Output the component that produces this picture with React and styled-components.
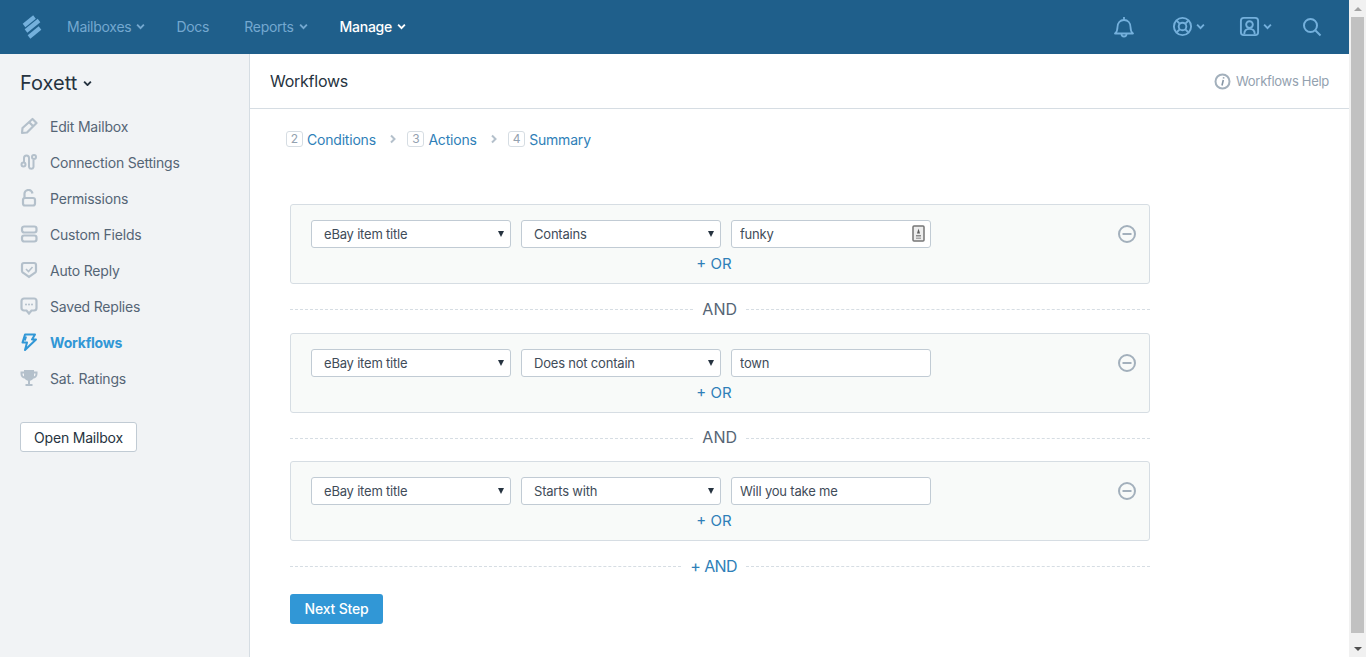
import React from 'react'
import styled, { createGlobalStyle } from 'styled-components'

const GlobalStyle = createGlobalStyle`
  html, body {
    margin: 0;
    padding: 0;
    height: 100%;
    overflow: hidden;
  }
  body {
    font-family: Inter, "Liberation Sans", sans-serif;
    font-size: 14px;
    letter-spacing: -0.2px;
    color: #3f4c59;
    background: #fff;
  }
  * {
    box-sizing: border-box;
  }
`

const Page = styled.div`
  display: flex;
  height: 100vh;
`

const Content = styled.div`
  flex: 1;
  min-width: 0;
  display: flex;
  flex-direction: column;
`

const ScrollTrack = styled.div`
  width: 17px;
  background: #f1f1f1;
  display: flex;
  flex-direction: column;
  align-items: stretch;
`

const ScrollThumb = styled.div`
  flex: 1;
  margin: 0 2px 7px;
  background: #c1c1c1;
`

const ScrollArrow = styled.div`
  height: 17px;
  display: flex;
  align-items: center;
  justify-content: center;
  &::before {
    content: '';
    border-left: 4px solid transparent;
    border-right: 4px solid transparent;
    ${(p) => (p.$down ? 'border-top: 4px solid #505050;' : 'border-bottom: 4px solid #a3a3a3;')}
  }
`

const TopBar = styled.header`
  height: 54px;
  background: #1f5f8b;
  display: flex;
  align-items: center;
  padding: 0 27px 1px 21px;
  flex-shrink: 0;
`

const Logo = styled.svg`
  width: 21px;
  height: 24px;
  margin-right: 25px;
`

const MainNav = styled.nav`
  display: flex;
  align-items: center;
  gap: 31px;
`

const NavLink = styled.a`
  display: flex;
  align-items: center;
  gap: 5px;
  font-size: 14px;
  letter-spacing: -0.27px;
  margin-right: ${(p) => p.$after || 0}px;
  color: ${(p) => (p.$active ? '#fff' : '#74a8d0')};
  font-weight: ${(p) => (p.$active ? 500 : 400)};
`

const TopIcons = styled.div`
  margin-left: auto;
  display: flex;
  align-items: center;
`

const IconGroup = styled.div`
  display: flex;
  align-items: center;
  gap: 3px;
  margin-left: ${(p) => p.$left || 0}px;
`

const Columns = styled.div`
  flex: 1;
  display: flex;
  min-height: 0;
`

const Sidebar = styled.aside`
  width: 250px;
  flex-shrink: 0;
  background: #f1f3f5;
  border-right: 1px solid #d6dde3;
  padding: 17px 0 0 20px;
`

const MailboxName = styled.h2`
  margin: 0 0 13px;
  height: 24px;
  display: flex;
  align-items: center;
  gap: 6px;
  font-size: 20px;
  line-height: 24px;
  letter-spacing: 0;
  font-weight: 400;
  color: #263340;
`

const SideList = styled.ul`
  list-style: none;
  margin: 0 0 26px;
  padding: 0;
`

const SideItem = styled.li`
  height: 36px;
  display: flex;
  align-items: center;
  gap: 12px;
  color: ${(p) => (p.$active ? '#3197d6' : '#556575')};
  font-weight: ${(p) => (p.$active ? 700 : 400)};
`

const SideIcon = styled.svg`
  width: 18px;
  height: 18px;
  flex-shrink: 0;
`

const OpenButton = styled.button`
  width: 117px;
  height: 30px;
  border: 1px solid #c1cbd4;
  border-radius: 3px;
  background: #fff;
  font: inherit;
  letter-spacing: inherit;
  color: #263340;
  padding: 0;
`

const Main = styled.main`
  flex: 1;
  min-width: 0;
`

const PageHead = styled.div`
  height: 55px;
  border-bottom: 1px solid #d6dde3;
  display: flex;
  align-items: center;
  justify-content: space-between;
  padding: 0 20px;
`

const PageTitle = styled.h1`
  margin: 0;
  font-size: 16px;
  letter-spacing: -0.25px;
  font-weight: 400;
  color: #263340;
`

const HelpLink = styled.a`
  display: flex;
  align-items: center;
  gap: 5px;
  font-size: 13px;
  letter-spacing: -0.3px;
  color: #93a1af;
`

const Steps = styled.ol`
  list-style: none;
  margin: 0;
  padding: 20px 0 0 36px;
  height: 95px;
  display: flex;
  align-items: flex-start;
`

const Step = styled.li`
  display: flex;
  align-items: center;
  height: 20px;
  gap: 4px;
  color: #2f7fb8;
`

const StepNum = styled.span`
  width: 17px;
  height: 16px;
  border: 1px solid #d6dde3;
  border-radius: 3px;
  font-size: 12px;
  line-height: 14px;
  text-align: center;
  letter-spacing: 0;
  color: #93a1af;
`

const StepArrow = styled.svg`
  width: 8px;
  height: 10px;
  margin: 5px 10px 0 13.5px;
`

const Form = styled.form`
  width: 860px;
  margin-left: 40px;
`

const RuleCard = styled.div`
  height: 80px;
  background: #f8faf9;
  border: 1px solid #d6dde3;
  border-radius: 3px;
  padding: 15px 12px 0 20px;
`

const RuleRow = styled.div`
  display: flex;
  align-items: center;
  gap: 10px;
`

const SelectWrap = styled.div`
  position: relative;
  width: 200px;
  height: 28px;
  &::after {
    content: '';
    position: absolute;
    right: 7px;
    top: 11px;
    border-left: 3.5px solid transparent;
    border-right: 3.5px solid transparent;
    border-top: 6px solid #263340;
    pointer-events: none;
  }
`

const Select = styled.select`
  appearance: none;
  width: 100%;
  height: 100%;
  padding: 0 0 0 12px;
  background: #fff;
  border: 1px solid #c1cbd4;
  border-radius: 3px;
  font: inherit;
  font-size: 13px;
  letter-spacing: inherit;
  color: #3f4c59;
`

const InputWrap = styled.div`
  position: relative;
  width: 200px;
  height: 28px;
`

const TextInput = styled.input`
  width: 100%;
  height: 100%;
  padding: 0 8px;
  background: #fff;
  border: 1px solid #c1cbd4;
  border-radius: 3px;
  font: inherit;
  font-size: 13px;
  letter-spacing: inherit;
  color: #3f4c59;
`

const FieldBadge = styled.svg`
  position: absolute;
  right: 6px;
  top: 5px;
  width: 13px;
  height: 17px;
`

const RemoveIcon = styled.svg`
  width: 20px;
  height: 20px;
  margin-left: auto;
`

const OrLink = styled.a`
  display: block;
  margin-top: 6px;
  padding-right: 20px;
  text-align: center;
  font-size: 15px;
  letter-spacing: 0;
  color: #2f7fb8;
  line-height: 20px;
`

const Divider = styled.div`
  height: 48.5px;
  padding-top: 1px;
  display: flex;
  align-items: center;
  gap: 9px;
  font-size: 16px;
  letter-spacing: ${(p) => (p.$link ? '-0.6px' : '0')};
  color: ${(p) => (p.$link ? '#2f7fb8' : '#556575')};
  &::before,
  &::after {
    content: '';
    margin-top: 2px;
    border-top: 1px dashed #d6dde3;
  }
  &::before {
    flex: 1;
  }
  &::after {
    flex: 0 0 404px;
  }
`

const NextButton = styled.button`
  display: block;
  margin-top: 4px;
  width: 93px;
  height: 30px;
  border: 0;
  border-radius: 3px;
  background: #3197d6;
  color: #fff;
  font: inherit;
  letter-spacing: inherit;
  font-weight: 500;
  padding: 0;
`

const Chevron = ({ color = '#74a8d0', size = 9 }) => (
  <svg width={size} height={size * 0.75} viewBox="0 0 8 6" fill="none">
    <path d="M1 1.500 4 4.500 7 1.500" stroke={color} strokeWidth="1.700" />
  </svg>
)

const sideIcons = {
  edit: (
    <g fill="none" stroke="#b4c0cb" strokeWidth="2.200" strokeLinejoin="round">
      <path d="M12.500 2 16.500 6 7 15.500 2 16l.5-5z" />
      <path d="M9.200 5.200l3.800 3.800" />
    </g>
  ),
  connection: (
    <g fill="none" stroke="#b4c0cb" strokeWidth="2">
      <circle cx="3.500" cy="11.500" r="2" />
      <circle cx="14" cy="4" r="2" />
      <path d="M4 9V5a2.500 2.500 0 0 1 5 0v9a2.300 2.300 0 0 0 4.500 0V7" />
    </g>
  ),
  lock: (
    <g fill="none" stroke="#b4c0cb" strokeWidth="2.200">
      <rect x="3" y="9" width="12" height="7.500" rx="2" />
      <path d="M4.500 9V5.500a4 4 0 0 1 8-1" />
    </g>
  ),
  fields: (
    <g fill="none" stroke="#b4c0cb" strokeWidth="2.200">
      <rect x="2" y="1.500" width="14.500" height="6" rx="2.200" />
      <rect x="2" y="10.500" width="14.500" height="6" rx="2.200" />
    </g>
  ),
  reply: (
    <g fill="none" stroke="#b4c0cb" strokeWidth="2.200">
      <path d="M4 2h10a2 2 0 0 1 2 2v6a2 2 0 0 1-1 1.700L9 16l-6-4.300A2 2 0 0 1 2 10V4a2 2 0 0 1 2-2z" />
      <path d="M6 8l2.500 2.500L12.500 6" strokeWidth="1.600" />
    </g>
  ),
  saved: (
    <g>
      <path d="M4 1.500h10a2.500 2.500 0 0 1 2.500 2.500v7a2.500 2.500 0 0 1-2.500 2.500h-2.500L9 16.500l-2.500-3H4A2.500 2.500 0 0 1 1.500 11V4A2.500 2.500 0 0 1 4 1.500z" fill="none" stroke="#b4c0cb" strokeWidth="2.200" />
      <circle cx="6" cy="7.500" r="1" fill="#b4c0cb" />
      <circle cx="9" cy="7.500" r="1" fill="#b4c0cb" />
      <circle cx="12" cy="7.500" r="1" fill="#b4c0cb" />
    </g>
  ),
  bolt: (
    <path d="M5 1.500h10L12 6.500h4L5 17l2-7.500H2.500z M6 3.500 4.800 7.500" fill="none" stroke="#3197d6" strokeWidth="2" strokeLinejoin="round" />
  ),
  trophy: (
    <g fill="none" stroke="#b4c0cb" strokeWidth="2">
      <path d="M5 2h8v5a4 4 0 0 1-8 0z" fill="#b4c0cb" />
      <path d="M5 3.500H1.500V5A3.500 3.500 0 0 0 5 8.500M13 3.500h3.500V5A3.500 3.500 0 0 1 13 8.500" />
      <path d="M9 11v4M5.500 16h7" />
    </g>
  ),
}

const sideItems = [
  ['edit', 'Edit Mailbox'],
  ['connection', 'Connection Settings'],
  ['lock', 'Permissions'],
  ['fields', 'Custom Fields'],
  ['reply', 'Auto Reply'],
  ['saved', 'Saved Replies'],
  ['bolt', 'Workflows', true],
  ['trophy', 'Sat. Ratings'],
]

const rules = [
  { op: 'Contains', value: 'funky', badge: true },
  { op: 'Does not contain', value: 'town' },
  { op: 'Starts with', value: 'Will you take me' },
]

const steps = [
  ['2', 'Conditions'],
  ['3', 'Actions'],
  ['4', 'Summary'],
]

const Rule = ({ op, value, badge }) => (
  <RuleCard>
    <RuleRow>
      <SelectWrap>
        <Select defaultValue="eBay item title">
          <option>eBay item title</option>
        </Select>
      </SelectWrap>
      <SelectWrap>
        <Select defaultValue={op}>
          <option>{op}</option>
        </Select>
      </SelectWrap>
      <InputWrap>
        <TextInput defaultValue={value} />
        {badge && (
          <FieldBadge viewBox="0 0 13 17">
            <rect x="1" y="1" width="11" height="15" rx="1" fill="#ededed" stroke="#757575" strokeWidth="1.500" />
            <path d="M6.500 3.500 8 8.500H5z" fill="#5e5e5e" />
            <rect x="4" y="10" width="5" height="1.500" fill="#8a8a8a" />
            <rect x="4" y="12.500" width="5" height="1.500" fill="#a8a8a8" />
          </FieldBadge>
        )}
      </InputWrap>
      <RemoveIcon viewBox="0 0 20 20" fill="none" stroke="#a3b0bc" strokeWidth="2">
        <circle cx="10" cy="10" r="8" />
        <path d="M5.500 10h9" />
      </RemoveIcon>
    </RuleRow>
    <OrLink>+ OR</OrLink>
  </RuleCard>
)

export default function App() {
  return (
    <>
      <GlobalStyle />
      <Page>
        <Content>
          <TopBar>
            <Logo viewBox="0 0 21 24" fill="none" stroke="#74b0dc" strokeWidth="4.200">
              <path d="M3 10.500 13.500 2" />
              <path d="M5 16 18 5.500" />
              <path d="M8 22 19 13" />
            </Logo>
            <MainNav>
              <NavLink>Mailboxes <Chevron /></NavLink>
              <NavLink $after={4}>Docs</NavLink>
              <NavLink $after={1}>Reports <Chevron /></NavLink>
              <NavLink $active>Manage <Chevron color="#fff" /></NavLink>
            </MainNav>
            <TopIcons>
              <IconGroup>
                <svg width="22" height="24" viewBox="0 0 22 24" fill="none" stroke="#74b0dc" strokeWidth="1.800">
                  <path d="M2 18.500c2-1.500 2.500-3 2.500-6.500C4.500 8 7 5 11 5s6.500 3 6.500 7c0 3.500.5 5 2.500 6.500z" strokeLinejoin="round" />
                  <path d="M11 2v3M8.500 19a2.500 2.500 0 0 0 5 0" />
                </svg>
              </IconGroup>
              <IconGroup $left={37}>
                <svg width="21" height="21" viewBox="0 0 22 22" fill="none" stroke="#74b0dc" strokeWidth="2">
                  <circle cx="11" cy="11" r="9" />
                  <circle cx="11" cy="11" r="4" />
                  <path d="M5 5l3 3M17 5l-3 3M5 17l3-3M17 17l-3-3" />
                </svg>
                <Chevron color="#74b0dc" />
              </IconGroup>
              <IconGroup $left={34}>
                <svg width="21" height="21" viewBox="0 0 22 22" fill="none" stroke="#74b0dc" strokeWidth="2">
                  <rect x="2" y="2" width="18" height="18" rx="3" />
                  <circle cx="11" cy="9" r="3.500" />
                  <path d="M5.500 19c0-4 2.500-5.500 5.500-5.500s5.500 1.500 5.500 5.500" />
                </svg>
                <Chevron color="#74b0dc" />
              </IconGroup>
              <IconGroup $left={30}>
                <svg width="20" height="20" viewBox="0 0 20 20" fill="none" stroke="#74b0dc" strokeWidth="2">
                  <circle cx="8.500" cy="8.500" r="6.500" />
                  <path d="M13.500 13.500l5 5" />
                </svg>
              </IconGroup>
            </TopIcons>
          </TopBar>
          <Columns>
            <Sidebar>
              <MailboxName>
                Foxett <Chevron color="#263340" />
              </MailboxName>
              <SideList>
                {sideItems.map(([icon, label, active]) => (
                  <SideItem key={label} $active={active}>
                    <SideIcon viewBox="0 0 18 18">{sideIcons[icon]}</SideIcon>
                    {label}
                  </SideItem>
                ))}
              </SideList>
              <OpenButton>Open Mailbox</OpenButton>
            </Sidebar>
            <Main>
              <PageHead>
                <PageTitle>Workflows</PageTitle>
                <HelpLink>
                  <svg width="17" height="17" viewBox="0 0 17 17" fill="none">
                    <circle cx="8.500" cy="8.500" r="7" stroke="#a3b0bc" strokeWidth="2" />
                    <path d="M9.300 7 8 12.500M9.600 4.300v1.200" stroke="#8595a4" strokeWidth="1.600" />
                  </svg>
                  Workflows Help
                </HelpLink>
              </PageHead>
              <Steps>
                {steps.map(([num, label], i) => (
                  <React.Fragment key={num}>
                    {i > 0 && (
                      <StepArrow viewBox="0 0 8 10" fill="none" stroke="#b4c0cb" strokeWidth="2">
                        <path d="M2 1.500 5.500 5 2 8.500" />
                      </StepArrow>
                    )}
                    <Step>
                      <StepNum>{num}</StepNum>
                      {label}
                    </Step>
                  </React.Fragment>
                ))}
              </Steps>
              <Form>
                <Rule {...rules[0]} />
                <Divider>AND</Divider>
                <Rule {...rules[1]} />
                <Divider>AND</Divider>
                <Rule {...rules[2]} />
                <Divider $link>+ AND</Divider>
                <NextButton type="button">Next Step</NextButton>
              </Form>
            </Main>
          </Columns>
        </Content>
        <ScrollTrack>
          <ScrollArrow />
          <ScrollThumb />
          <ScrollArrow $down />
        </ScrollTrack>
      </Page>
    </>
  )
}
